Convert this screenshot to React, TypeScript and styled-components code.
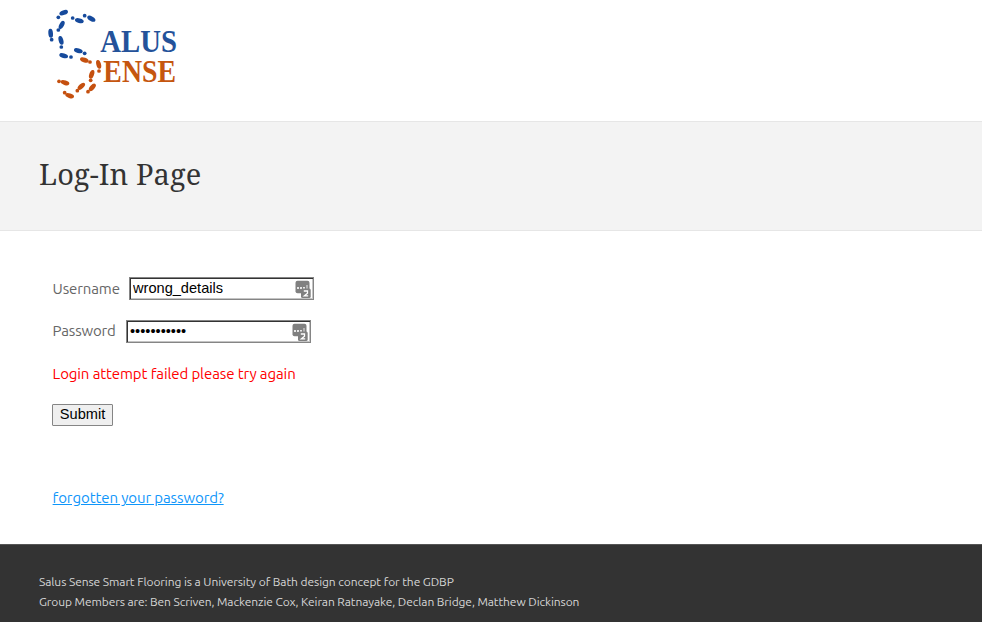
import React from "react";
import styled, { createGlobalStyle } from "styled-components";

const GlobalStyle = createGlobalStyle`
  * { box-sizing: border-box; }
  html, body { margin: 0; padding: 0; background: #fff; }
  body { font-family: Ubuntu, "Noto Sans", sans-serif; overflow: hidden; }
`;

const Page = styled.div`
  display: flex;
  flex-direction: column;
  height: 622px;
`;

const Header = styled.header`
  height: 121px;
  padding-left: 40px;
  flex: none;
`;

const Logo = styled.svg`
  display: block;
  width: 150px;
  height: 110px;
`;

const Banner = styled.section`
  height: 110px;
  flex: none;
  padding: 31px 39px 0;
  background: #f3f3f3;
  border-top: 1px solid #e6e6e6;
  border-bottom: 1px solid #e6e6e6;
`;

const Title = styled.h1`
  margin: 0;
  font: 400 29px/42px "Droid Serif", "Noto Serif", "DejaVu Serif Condensed", "DejaVu Serif", serif;
  letter-spacing: 0.1px;
  color: #333;
  white-space: nowrap;
`;

const Form = styled.form`
  display: flex;
  flex-direction: column;
  align-items: flex-start;
  height: 313px;
  flex: none;
  padding: 46px 52px 0;
`;

const Field = styled.div`
  display: flex;
  align-items: flex-start;
  height: 43px;
`;

const Text = styled.span<{ $w: number; $color?: string; $spacing: number; $leading?: number }>`
  display: block;
  width: ${(p) => p.$w}px;
  padding-left: 0.6px;
  font-size: 15px;
  line-height: ${(p) => p.$leading ?? 24}px;
  letter-spacing: ${(p) => p.$spacing}px;
  color: ${(p) => p.$color ?? "#666"};
  white-space: nowrap;
`;

const InputBox = styled.div`
  display: flex;
  align-items: center;
  width: 185px;
  height: 23px;
  padding: 0 2px 0 1px;
  border: 1px solid #858585;
  box-shadow: inset 1px 1px 0 #333, inset -1px -1px 0 #c4c4c4;
  background: #fff;
`;

const Input = styled.input`
  flex: 1;
  min-width: 0;
  height: 19px;
  padding: 0 0 1px 2px;
  border: 0;
  outline: 0;
  background: transparent;
  color: #000;
  font: 14.6px "Liberation Sans", Arial, sans-serif;
`;

const Badge = styled.svg`
  width: 16px;
  height: 18px;
  flex: none;
`;

const ErrorRow = styled.div`
  height: 41px;
`;

const Submit = styled.button`
  width: 61px;
  height: 22px;
  margin: 0;
  padding: 0 0 2px;
  border: 1px solid #858585;
  border-radius: 1px;
  background: #efefef;
  color: #000;
  font: 14.6px/18px "Liberation Sans", Arial, sans-serif;
`;

const Forgot = styled.a`
  margin-top: 60px;
  margin-left: 0.6px;
  font-size: 15px;
  line-height: 24px;
  letter-spacing: -0.1px;
  color: #0f96fa;
  text-decoration: underline;
  white-space: nowrap;
`;

const Footer = styled.footer`
  flex: 1;
  padding: 27px 39px 0;
  background: #333;
  border-top: 1px solid #555;
`;

const FooterLine = styled.p<{ $spacing: number }>`
  margin: 0;
  font-size: 12px;
  line-height: 20px;
  letter-spacing: ${(p) => p.$spacing}px;
  color: #d6d6d6;
  white-space: nowrap;
`;

/* sole x, sole y, angle, heel x, heel y */
type Step = [number, number, number, number, number];

const blueSteps: Step[] = [
  [71, 38, -20, 55, 52],
  [118, 62, 14, 98, 54],
  [154, 56, 30, 134, 47],
  [65, 75, -62, 55, 90],
  [32, 100, 85, 35, 119],
  [63, 121, 75, 64, 141],
  [115, 152, 16, 134, 160],
  [71, 167, 16, 93, 171],
];

const orangeSteps: Step[] = [
  [133, 180, 20, 150, 186],
  [176, 193, 75, 177, 213],
  [155, 223, -70, 152, 241],
  [157, 262, -48, 144, 275],
  [124, 259, -42, 112, 272],
  [89, 287, 18, 74, 278],
  [75, 248, 18, 57, 244],
];

const Steps = ({ steps, fill }: { steps: Step[]; fill: string }) => (
  <g fill={fill}>
    {steps.map(([x, y, a, hx, hy]) => (
      <g key={`${x}-${y}`}>
        <ellipse cx={x} cy={y} rx={13.5} ry={7} transform={`rotate(${a} ${x} ${y})`} />
        <circle cx={hx} cy={hy} r={5.6} />
      </g>
    ))}
  </g>
);

const SalusLogo = () => (
  <Logo viewBox="0 0 450 330" role="img" aria-label="Salus Sense">
    <Steps steps={blueSteps} fill="#164a9c" />
    <Steps steps={orangeSteps} fill="#c5500f" />
    <g fontFamily="Liberation Serif, serif" fontWeight="700" fontSize="93">
      <text x="181" y="155" fill="#24529a" textLength="230" lengthAdjust="spacingAndGlyphs">ALUS</text>
      <text x="190" y="245" fill="#c5560f" textLength="218" lengthAdjust="spacingAndGlyphs">ENSE</text>
    </g>
  </Logo>
);

const PasswordBadge = () => (
  <Badge viewBox="0 0 16 18">
    <rect x="0.5" y="0.8" width="14" height="12.4" rx="2" fill="#808080" />
    <path d="M2 7h2v2H2zM5 7h2v2H5zM8 7h2v2H8zM11.5 5h1v4h-1z" fill="#e6e6e6" />
    <rect x="6" y="8.5" width="9.7" height="9.5" rx="1.5" fill="#808080" />
    <path d="M8.8 11h3.7v2.2l-3.2 2.7h3.9" fill="none" stroke="#fff" strokeWidth="1.3" />
  </Badge>
);

export default function App() {
  return (
    <Page>
      <GlobalStyle />
      <Header>
        <SalusLogo />
      </Header>
      <Banner>
        <Title>Log-In Page</Title>
      </Banner>
      <Form onSubmit={(e) => e.preventDefault()}>
        <Field>
          <Text as="label" htmlFor="username" $w={77} $spacing={-0.12}>Username</Text>
          <InputBox>
            <Input id="username" defaultValue="wrong_details" />
            <PasswordBadge />
          </InputBox>
        </Field>
        <Field>
          <Text as="label" htmlFor="password" $w={74} $spacing={-0.16} $leading={22}>Password</Text>
          <InputBox>
            <Input id="password" type="password" defaultValue="wrongsecret" />
            <PasswordBadge />
          </InputBox>
        </Field>
        <ErrorRow>
          <Text $w={250} $color="#f00" $spacing={-0.1} $leading={22}>Login attempt failed please try again</Text>
        </ErrorRow>
        <Submit type="submit">Submit</Submit>
        <Forgot href="#">forgotten your password?</Forgot>
      </Form>
      <Footer>
        <FooterLine $spacing={-0.08}>Salus Sense Smart Flooring is a University of Bath design concept for the GDBP</FooterLine>
        <FooterLine $spacing={-0.09}>Group Members are: Ben Scriven, Mackenzie Cox, Keiran Ratnayake, Declan Bridge, Matthew Dickinson</FooterLine>
      </Footer>
    </Page>
  );
}
